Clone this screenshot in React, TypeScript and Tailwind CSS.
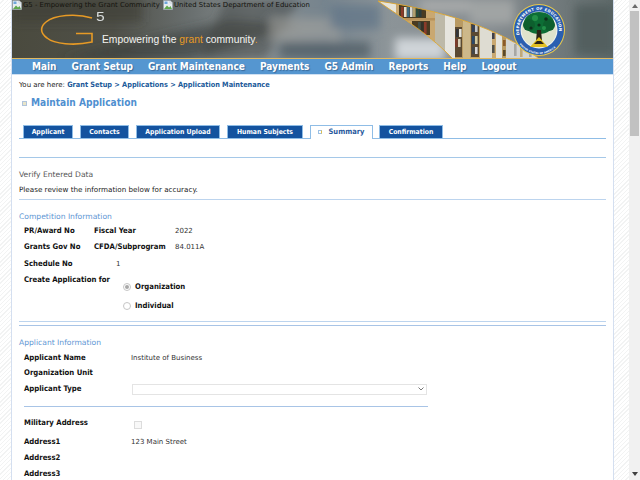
import React from "react";

const hatch =
  "bg-[repeating-linear-gradient(135deg,#ffffff_0px,#ffffff_2px,#f2f3f3_2px,#f2f3f3_3px)]";
const bold = "font-['DejaVu_Sans_Condensed','DejaVu_Sans',sans-serif] font-bold";

function BrokenImage() {
  return (
    <svg width="10" height="10" viewBox="0 0 10 10" className="shrink-0">
      <path d="M0.5 0.5H7L9.5 3V9.5H0.5Z" fill="#e8edf2" stroke="#9aa3ab" strokeWidth="0.7" />
      <path d="M1 9L4 5.5L6 7.5L7.5 6L9 9Z" fill="#5fa84d" />
      <rect x="1.5" y="1.5" width="3" height="2.5" fill="#6fa6dc" />
      <path d="M7 0.5L9.5 3H7Z" fill="#ffffff" stroke="#9aa3ab" strokeWidth="0.4" />
    </svg>
  );
}

function Banner() {
  const shelves = [
    { x: 396, w: 39, top: 4, c: "#c9a871" },
    { x: 435, w: 10, top: 12, c: "#bdb9a8" },
    { x: 445, w: 10, top: 12, c: "#e6e5de" },
    { x: 455, w: 8, top: 18, c: "#b89a64" },
    { x: 463, w: 7, top: 18, c: "#cdb88a" },
    { x: 470, w: 10, top: 20, c: "#c2a468" },
    { x: 480, w: 12, top: 24, c: "#dedcd2" },
    { x: 492, w: 4, top: 28, c: "#c9a871" },
    { x: 496, w: 6, top: 30, c: "#e4e3dc" },
    { x: 502, w: 4, top: 32, c: "#b89a64" },
    { x: 506, w: 34, top: 36, c: "#d4d5d2" },
  ];
  const books = [
    { x: 401, y: 7, h: 10, c: "#8a3a2a" }, { x: 404, y: 7, h: 10, c: "#e4e0d0" }, { x: 407, y: 7, h: 10, c: "#3e6a80" },
    { x: 410, y: 7, h: 10, c: "#d8d8d0" }, { x: 413, y: 7, h: 10, c: "#b0a070" }, { x: 416, y: 7, h: 10, c: "#2b4a3a" },
    { x: 419, y: 7, h: 10, c: "#2b3a3a" }, { x: 421, y: 22, h: 12, c: "#30302c" }, { x: 424, y: 22, h: 12, c: "#8a3a2a" },
    { x: 418, y: 22, h: 12, c: "#40504c" }, { x: 456, y: 29, h: 8, c: "#30363a" }, { x: 459, y: 29, h: 8, c: "#e4e4dc" },
    { x: 455, y: 39, h: 8, c: "#7a3a2a" }, { x: 458, y: 39, h: 8, c: "#d8d0b8" }, { x: 472, y: 25, h: 7, c: "#30405a" },
    { x: 475, y: 25, h: 7, c: "#c0c4c8" }, { x: 472, y: 36, h: 8, c: "#2a4a6a" }, { x: 475, y: 36, h: 8, c: "#d0c8a0" },
    { x: 472, y: 47, h: 7, c: "#40464c" }, { x: 475, y: 47, h: 7, c: "#d8d8d8" }, { x: 492, y: 33, h: 6, c: "#40404a" },
    { x: 492, y: 45, h: 8, c: "#50504a" }, { x: 503, y: 40, h: 6, c: "#8a5a2a" }, { x: 503, y: 50, h: 6, c: "#5a4a2a" },
    { x: 514, y: 44, h: 12, c: "#a8a8a4" }, { x: 520, y: 46, h: 11, c: "#c0a878" }, { x: 529, y: 48, h: 9, c: "#a0a4a8" },
  ];
  return (
    <div className="relative h-[58px] overflow-hidden bg-[#596066]">
      <svg viewBox="12 0 601 58" className="block h-[58px] w-[601px]">
        <defs>
          <linearGradient id="bg" x1="0" y1="0" x2="1" y2="0">
            <stop offset="0" stopColor="#4a4a3e" />
            <stop offset="0.17" stopColor="#4f5048" />
            <stop offset="0.3" stopColor="#6a7070" />
            <stop offset="0.4" stopColor="#878d8e" />
            <stop offset="0.52" stopColor="#76848e" />
            <stop offset="0.62" stopColor="#8c9498" />
            <stop offset="0.8" stopColor="#868c90" />
            <stop offset="1" stopColor="#5f6a6a" />
          </linearGradient>
          <clipPath id="wedge">
            <path d="M378 1C440 10 500 28 538 58H452C425 30 395 14 378 1Z" />
          </clipPath>
          <filter id="soft" x="-30%" y="-30%" width="160%" height="160%">
            <feGaussianBlur stdDeviation="5" />
          </filter>
          <filter id="tiny">
            <feGaussianBlur stdDeviation="0.35" />
          </filter>
          <path id="sealTop" d="M539 50A20 20 0 1 1 539.01 50" fill="none" />
          <path id="sealBot" d="M515 30A24 24 0 0 0 563 30" fill="none" />
        </defs>
        <rect x="12" y="0" width="601" height="58" fill="url(#bg)" />
        <g filter="url(#soft)">
          <rect x="12" y="0" width="130" height="22" fill="#3f3f36" opacity="0.7" />
          <path d="M60 58L230 20L300 25L190 58Z" fill="#363a38" opacity="0.55" />
          <path d="M225 0H300L265 58H200Z" fill="#3e4242" opacity="0.5" />
          <rect x="270" y="18" width="70" height="22" fill="#a3a49e" opacity="0.6" />
          <rect x="330" y="5" width="50" height="24" fill="#64788a" opacity="0.8" />
          <rect x="395" y="38" width="50" height="22" fill="#cfd4d8" />
          <rect x="420" y="0" width="50" height="12" fill="#a8aaaa" />
          <rect x="470" y="0" width="44" height="24" fill="#a0a4a4" />
          <rect x="575" y="5" width="40" height="50" fill="#535e5e" />
          <rect x="280" y="42" width="90" height="16" fill="#4c5a62" opacity="0.7" />
        </g>
        <g filter="url(#tiny)">
          <g clipPath="url(#wedge)">
            <rect x="370" y="0" width="180" height="58" fill="#e6e4da" />
            {shelves.map((s) => (
              <rect key={s.x} x={s.x} y={s.top} width={s.w} height={58 - s.top} fill={s.c} />
            ))}
            <rect x="399" y="5" width="27" height="13" fill="#4a3a22" />
            <rect x="412" y="21" width="18" height="14" fill="#4a3a22" />
            <rect x="396" y="18" width="39" height="2.5" fill="#b8925a" />
            <rect x="455" y="27" width="7" height="30" fill="#5a4a30" />
            <rect x="471" y="24" width="8" height="33" fill="#5a4a30" />
            {books.map((b, i) => (
              <rect key={i} x={b.x} y={b.y} width="2.6" height={b.h} fill={b.c} />
            ))}
          </g>
          <path d="M378 1C440 10 500 28 538 58" fill="none" stroke="#dba42c" strokeWidth="0.9" />
          <path d="M378 1C395 14 425 30 452 58" fill="none" stroke="#dba42c" strokeWidth="0.9" />
          <path
            d="M92 18C76 13 54 15 46 22C40 27 40 33 47 38C54 44 74 46 92 42V33.5H76"
            fill="none"
            stroke="#e79a25"
            strokeWidth="1.6"
          />
          <circle cx="539" cy="30" r="26" fill="#e8c84a" />
          <circle cx="539" cy="30" r="25" fill="#2a5eb0" />
          <circle cx="539" cy="30" r="18.5" fill="#f0f4f0" />
          <circle cx="539" cy="30" r="17.5" fill="#dfe3cc" />
          <ellipse cx="539" cy="23" rx="15" ry="11" fill="#0f6d35" />
          <circle cx="529" cy="25" r="6" fill="#0b5f2e" />
          <circle cx="549" cy="25" r="6" fill="#0b5f2e" />
          <circle cx="535" cy="18" r="3" fill="#249048" />
          <circle cx="544" cy="28" r="2" fill="#249048" />
          <circle cx="531" cy="28" r="1.6" fill="#0a2f1a" />
          <circle cx="546" cy="19" r="1.8" fill="#0a2f1a" />
          <circle cx="539" cy="25" r="1.6" fill="#0a2f1a" />
          <path d="M537 30H541L542 41H536Z" fill="#2c2412" />
          <path d="M530 47L539 37L548 47Z" fill="#e2c020" />
          <path d="M537 41H541L544 44H534Z" fill="#2c2412" />
        </g>
        <text fontFamily="'DejaVu Sans',sans-serif" fontWeight="700" fontSize="3.9" fill="#ffffff" letterSpacing="0.25">
          <textPath href="#sealTop" startOffset="21%">DEPARTMENT OF EDUCATION</textPath>
        </text>
        <text fontFamily="'DejaVu Sans',sans-serif" fontWeight="700" fontSize="2.4" fill="#ffffff" letterSpacing="0.1">
          <textPath href="#sealBot" startOffset="20%">UNITED STATES OF AMERICA</textPath>
        </text>
      </svg>
      <div className="absolute left-0 top-0 flex h-[10px] items-center text-[6.9px] leading-[10px] text-[#14140f]">
        <BrokenImage />
        <span className="ml-px w-[140px] whitespace-nowrap">G5 - Empowering the Grant Community</span>
        <BrokenImage />
        <span className="ml-px whitespace-nowrap">United States Department of Education</span>
      </div>
      <span className="absolute left-[84px] top-[10px] origin-left scale-x-[1.3] font-['Liberation_Sans',sans-serif] text-[12px] leading-[14px] text-[#d8dcdc]">5</span>
      <div className="absolute left-[90px] top-[33px] whitespace-nowrap font-['Liberation_Sans',sans-serif] text-[10.3px] leading-[13px] text-[#f4f4f0]">
        Empowering the <span className="text-[#e79a25]">grant</span> community<span className="text-[#e79a25]">.</span>
      </div>
    </div>
  );
}

function Nav() {
  const items = ["Main", "Grant Setup", "Grant Maintenance", "Payments", "G5 Admin", "Reports", "Help", "Logout"];
  return (
    <div className={`flex h-[17px] gap-[15px] border-t border-b border-t-[#e0b860] border-b-[#cfe0f2] bg-[#5596d0] pl-5 text-[10px] leading-[15px] text-white [text-shadow:1px_1px_1px_#3a6a9a] ${bold}`}>
      {items.map((t) => (
        <span key={t} className="whitespace-nowrap">
          {t}
        </span>
      ))}
    </div>
  );
}

function Tab({ label, w, active, className = "" }: { label: string; w: string; active?: boolean; className?: string }) {
  if (active) {
    return (
      <div className={`relative z-10 flex h-[14px] items-center justify-center gap-[6px] border border-b-0 border-[#8fbde6] bg-white pb-px text-[7.5px] text-[#2a5a9e] ${bold} ${w}`}>
        <span className="h-[4px] w-[4px] border border-[#9cc0e4] border-r-[#e0c050]" />
        {label}
      </div>
    );
  }
  return (
    <div className={`flex h-[13px] items-center justify-center border border-[#8fbde6] border-b-0 bg-[#14539f] text-[6.8px] text-white ${bold} ${w} ${className}`}>
      {label}
    </div>
  );
}

function Row({ h, children, className = "" }: { h: string; children: React.ReactNode; className?: string }) {
  return <div className={`flex items-center whitespace-nowrap ${h} ${className}`}>{children}</div>;
}

function Label({ children, w }: { children: React.ReactNode; w?: string }) {
  return <span className={`text-[7.7px] text-[#111] ${bold} ${w ?? ""}`}>{children}</span>;
}

function Hr({ c, className = "" }: { c: string; className?: string }) {
  return <div className={`h-px ${c} ${className}`} />;
}

function Radio({ on }: { on?: boolean }) {
  return (
    <span className="flex h-[8px] w-[8px] items-center justify-center rounded-full border border-[#c6c6c6] bg-white">
      {on && <span className="h-[4px] w-[4px] rounded-full bg-[#a8a8a8]" />}
    </span>
  );
}

export default function App() {
  return (
    <div className="flex h-[480px] w-[640px] overflow-hidden bg-white font-['DejaVu_Sans',Verdana,sans-serif] text-[7px] text-[#333]">
      <div className={`h-full w-[12px] shrink-0 border-r border-[#d4dff0] ${hatch}`} />
      <main className="h-full w-[602px] shrink-0 border-r border-[#d4dff0] bg-white">
        <Banner />
        <Nav />
        <div className="px-[7px]">
          <Row h="h-[21px]" className="text-[#222]">
            You are here:&nbsp;
            <span className={`text-[7.3px] text-[#215a9a] ${bold}`}>Grant Setup &gt; Applications &gt; Application Maintenance</span>
          </Row>
          <Row h="h-[14px]">
            <span className="ml-[3px] mr-[4px] h-[5px] w-[5px] border border-[#b0c4dc] bg-[#e8e4c8]" />
            <span className={`text-[10.1px] text-[#4f8fd0] ${bold}`}>Maintain Application</span>
          </Row>
          <div className="mt-[15px] flex h-[14px] gap-[7px] border-b border-[#8fbde6] pl-1">
            <Tab label="Applicant" w="w-[50px]" />
            <Tab label="Contacts" w="w-[49px]" />
            <Tab label="Application Upload" w="w-[84px]" />
            <Tab label="Human Subjects" w="w-[76px]" />
            <Tab label="Summary" w="w-[63px]" active />
            <Tab label="Confirmation" w="w-[64px]" className="-ml-px" />
          </div>
          <Hr c="bg-[#a5c8e8]" className="mt-[18px]" />
          <Row h="h-[12px]" className="mt-[11px] text-[7.6px] text-[#555]">Verify Entered Data</Row>
          <Row h="h-[12px]" className="mt-[3px] text-[7.2px] text-[#222]">Please review the information below for accuracy.</Row>
          <Hr c="bg-[#bcd4ee]" className="mt-[3px]" />
          <Row h="h-[12px]" className="mt-[11px] text-[7.6px] text-[#5f97d4]">Competition Information</Row>
          <div className="pl-[5px]">
            <Row h="h-[16px]">
              <Label w="w-[70px]">PR/Award No</Label>
              <Label w="w-[81px]">Fiscal Year</Label>
              2022
            </Row>
            <Row h="h-[16px]">
              <Label w="w-[70px]">Grants Gov No</Label>
              <Label w="w-[81px]">CFDA/Subprogram</Label>
              84.011A
            </Row>
            <Row h="h-[16px]" className="mt-px">
              <Label w="w-[92px]">Schedule No</Label>
              1
            </Row>
            <div className="flex h-[44px]">
              <Row h="h-[16px]">
                <Label w="w-[99px]">Create Application for</Label>
              </Row>
              <div className="mt-[5px]">
                <Row h="h-[20px]" className="gap-1">
                  <Radio on />
                  <Label>Organization</Label>
                </Row>
                <Row h="h-[18px]" className="gap-1">
                  <Radio />
                  <Label>Individual</Label>
                </Row>
              </div>
            </div>
          </div>
          <Hr c="bg-[#bcd4ee]" className="mt-[5px]" />
          <Hr c="bg-[#a8c4e6]" className="mt-[3px]" />
          <Row h="h-[12px]" className="mt-[11px] text-[7.6px] text-[#5f97d4]">Applicant Information</Row>
          <div className="pl-[5px]">
            <Row h="h-[16px]" className="mt-px">
              <Label w="w-[107px]">Applicant Name</Label>
              Institute of Business
            </Row>
            <Row h="h-[16px]" className="-mt-px">
              <Label>Organization Unit</Label>
            </Row>
            <Row h="h-[16px]">
              <Label w="w-[108px]">Applicant Type</Label>
              <div className="flex h-[11px] w-[295px] items-center justify-end border border-[#e4e4e4] bg-white pr-[2px]">
                <svg width="6" height="4" viewBox="0 0 6 4">
                  <path d="M0.5 0.5L3 3L5.5 0.5" fill="none" stroke="#777" strokeWidth="1" />
                </svg>
              </div>
            </Row>
            <Hr c="w-[404px] bg-[#a8c4e6]" className="mt-[9px]" />
            <Row h="h-[16px]" className="mt-[8px]">
              <Label w="w-[110px]">Military Address</Label>
              <span className="mt-[4px] h-[8px] w-[8px] border border-[#dcdcdc] bg-[#f8f8f8]" />
            </Row>
            <Row h="h-[16px]" className="mt-[3px]">
              <Label w="w-[107px]">Address1</Label>
              123 Main Street
            </Row>
            <Row h="h-[16px]"><Label>Address2</Label></Row>
            <Row h="h-[16px]"><Label>Address3</Label></Row>
          </div>
        </div>
      </main>
      <div className={`h-full w-[15px] shrink-0 ${hatch}`} />
      <div className="flex h-full w-[11px] shrink-0 flex-col items-center bg-[#f1f1f1]">
        <svg width="6" height="10" viewBox="0 0 6 10" className="mt-[1px] shrink-0">
          <path d="M3 3L6 7H0Z" fill="#6a6a6a" />
        </svg>
        <div className="h-[125px] w-[9px] bg-[#c1c1c1]" />
        <div className="flex-1" />
        <svg width="6" height="10" viewBox="0 0 6 10" className="mb-[1px] shrink-0">
          <path d="M3 7L6 3H0Z" fill="#404040" />
        </svg>
      </div>
    </div>
  );
}
